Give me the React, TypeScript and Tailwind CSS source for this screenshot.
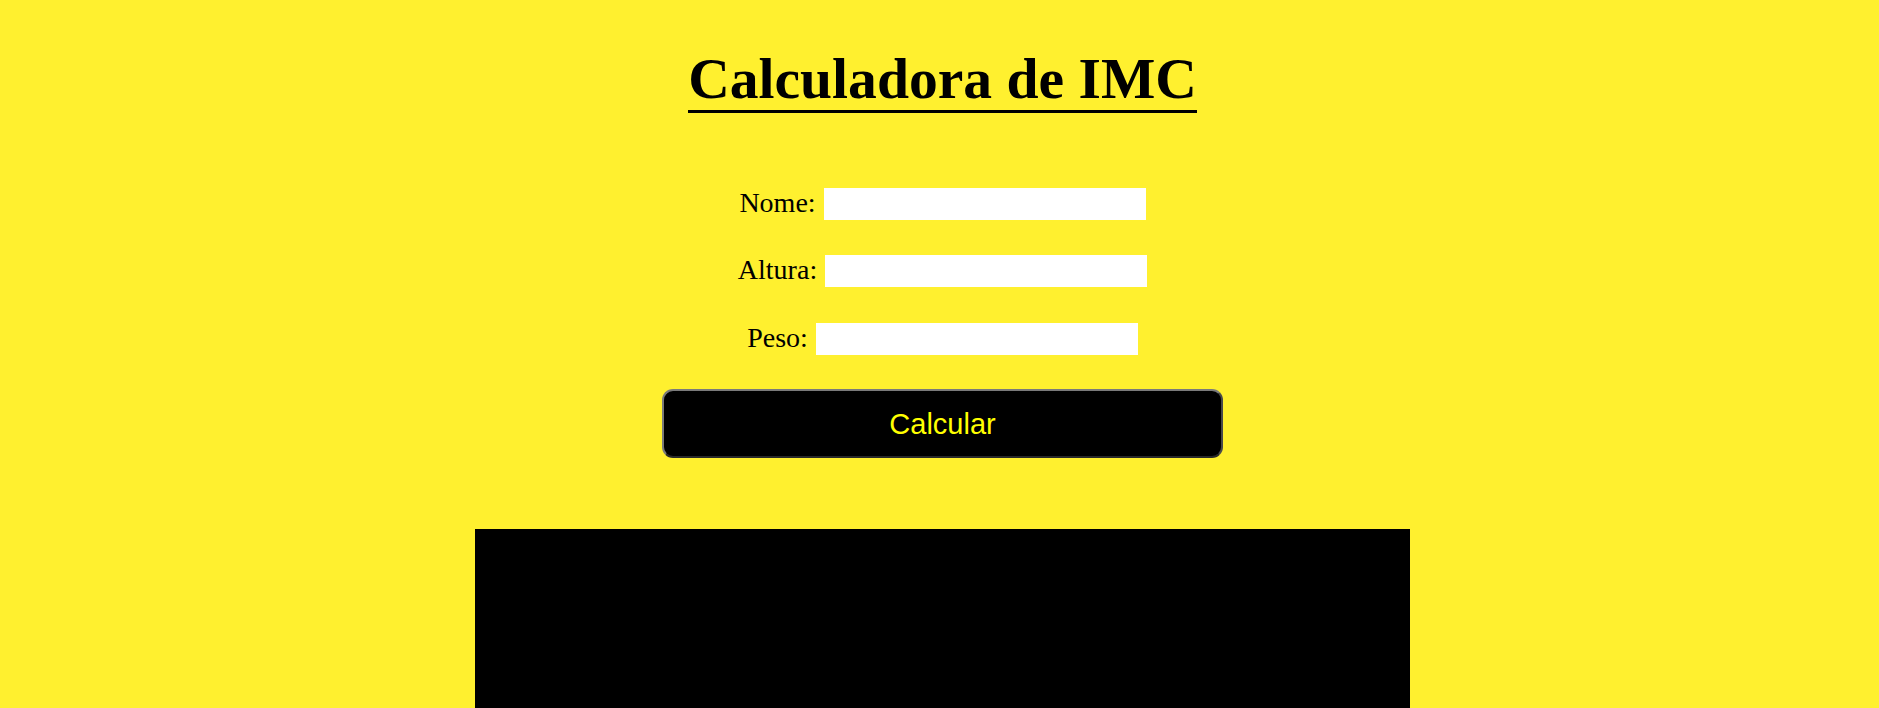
import React from "react";

function Row({ label }: { label: string }) {
  return (
    <div className="flex items-start justify-center gap-[8px]">
      <label className="text-[28px] leading-[29px] text-black">{label}</label>
      <input
        type="text"
        className="w-[322px] h-[32px] bg-white border-0 outline-none px-1 text-[18px]"
      />
    </div>
  );
}

export default function App() {
  return (
    <div
      className="min-h-screen w-full bg-[#fff02f] flex flex-col items-center pl-[6px] overflow-hidden"
      style={{ fontFamily: '"Liberation Serif", "Times New Roman", serif' }}
    >
      <h1 className="mt-[47px] text-[57.6px] leading-[64px] font-bold text-black text-center">
        <span className="border-b-[3px] border-black">Calculadora de IMC</span>
      </h1>
      <div className="mt-[77px] flex flex-col items-center">
        <Row label="Nome:" />
        <div className="mt-[35px]">
          <Row label="Altura:" />
        </div>
        <div className="mt-[36px]">
          <Row label="Peso:" />
        </div>
      </div>
      <button
        className="mt-[34px] w-[561px] h-[69px] bg-black rounded-[11px] border-2 border-t-[#7a7a7a] border-l-[#7a7a7a] border-r-[#4a4a4a] border-b-[#2a2a2a] text-[#ffff00] text-[29px] leading-[32px]"
        style={{ fontFamily: '"Liberation Sans", Arial, sans-serif' }}
      >
        Calcular
      </button>
      <div className="mt-[71px] w-[935px] h-[300px] bg-black shrink-0" />
    </div>
  );
}
